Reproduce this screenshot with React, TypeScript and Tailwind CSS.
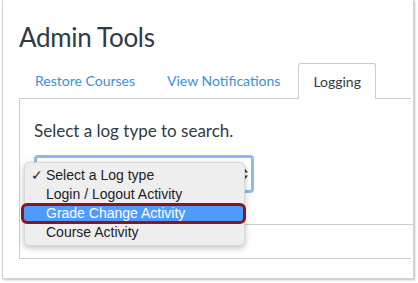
import React from "react";

export default function App() {
  const lato = { fontFamily: "Lato, 'Open Sans', sans-serif" } as React.CSSProperties;
  const sys = { fontFamily: "'Liberation Sans', Arial, sans-serif" } as React.CSSProperties;
  return (
    <div className="w-[418px] h-[283px] bg-white overflow-hidden">
      <div
        className="ml-[2px] w-[412px] h-[279px] bg-white border-l border-r border-b border-[#cfd3d6] shadow-[1px_1px_2px_rgba(0,0,0,0.25)] pl-[16px] pr-[2px]"
        style={lato}
      >
        <h1 className="pt-[20px] text-[26px] leading-[34px] text-[#2d3b45] tracking-[-0.3px]">Admin Tools</h1>
        <div className="mt-[9px] flex items-end h-[36px] border-b border-[#c7cdd1]">
          <div className="px-4 h-[35px] flex items-center text-[14px] text-[#3d8fe0]">Restore Courses</div>
          <div className="px-4 h-[35px] flex items-center text-[14px] text-[#3d8fe0]">View Notifications</div>
          <div className="ml-[2px] px-[14px] h-[36px] -mb-px flex items-center text-[14px] text-[#2d3b45] bg-white border border-b-0 border-[#c7cdd1] rounded-t-[3px]">Logging</div>
        </div>
        <div className="border-l border-b border-[#c7cdd1] h-[160px] pl-[14px] pt-[22px]">
          <div className="text-[17px] leading-[20px] text-[#2d3b45]">Select a log type to search.</div>
          <div className="relative mt-[14px]">
            <div className="w-[220px] h-[38px] border-[3px] border-[#8ab9f5] rounded-[4px] bg-white flex items-center justify-end pr-[2px]">
              <svg width="9" height="14" viewBox="0 0 9 14">
                <path d="M4.5 1 L8 5.5 L1 5.5 Z" fill="#333" />
                <path d="M4.5 13 L8 8.5 L1 8.5 Z" fill="#333" />
              </svg>
            </div>
            <div className="mt-[31px] -mr-[3px] border-t border-[#c7cdd1]" />
            <div
              className="absolute left-[-10px] top-[7px] w-[221px] h-[84px] bg-[#eeeeee] rounded-[5px] border border-[#d8d8d8] shadow-[0_2px_6px_rgba(0,0,0,0.25)] pt-[3px] text-[14px] text-[#222]"
              style={sys}
            >
              <div className="h-[19px] flex items-center pl-[6px]">
                <span className="w-[15px]">✓</span>
                <span>Select a Log type</span>
              </div>
              <div className="h-[19px] flex items-center pl-[21px]">Login / Logout Activity</div>
              <div className="relative h-[19px] flex items-center pl-[21px] text-white">
                <div className="absolute left-[-4px] right-[-2px] top-[-1px] bottom-[-1px] bg-[#4d9bff] border-[3px] border-[#861620] rounded-[6px]" />
                <span className="relative">Grade Change Activity</span>
              </div>
              <div className="h-[19px] flex items-center pl-[21px]">Course Activity</div>
            </div>
          </div>
        </div>
      </div>
    </div>
  );
}
